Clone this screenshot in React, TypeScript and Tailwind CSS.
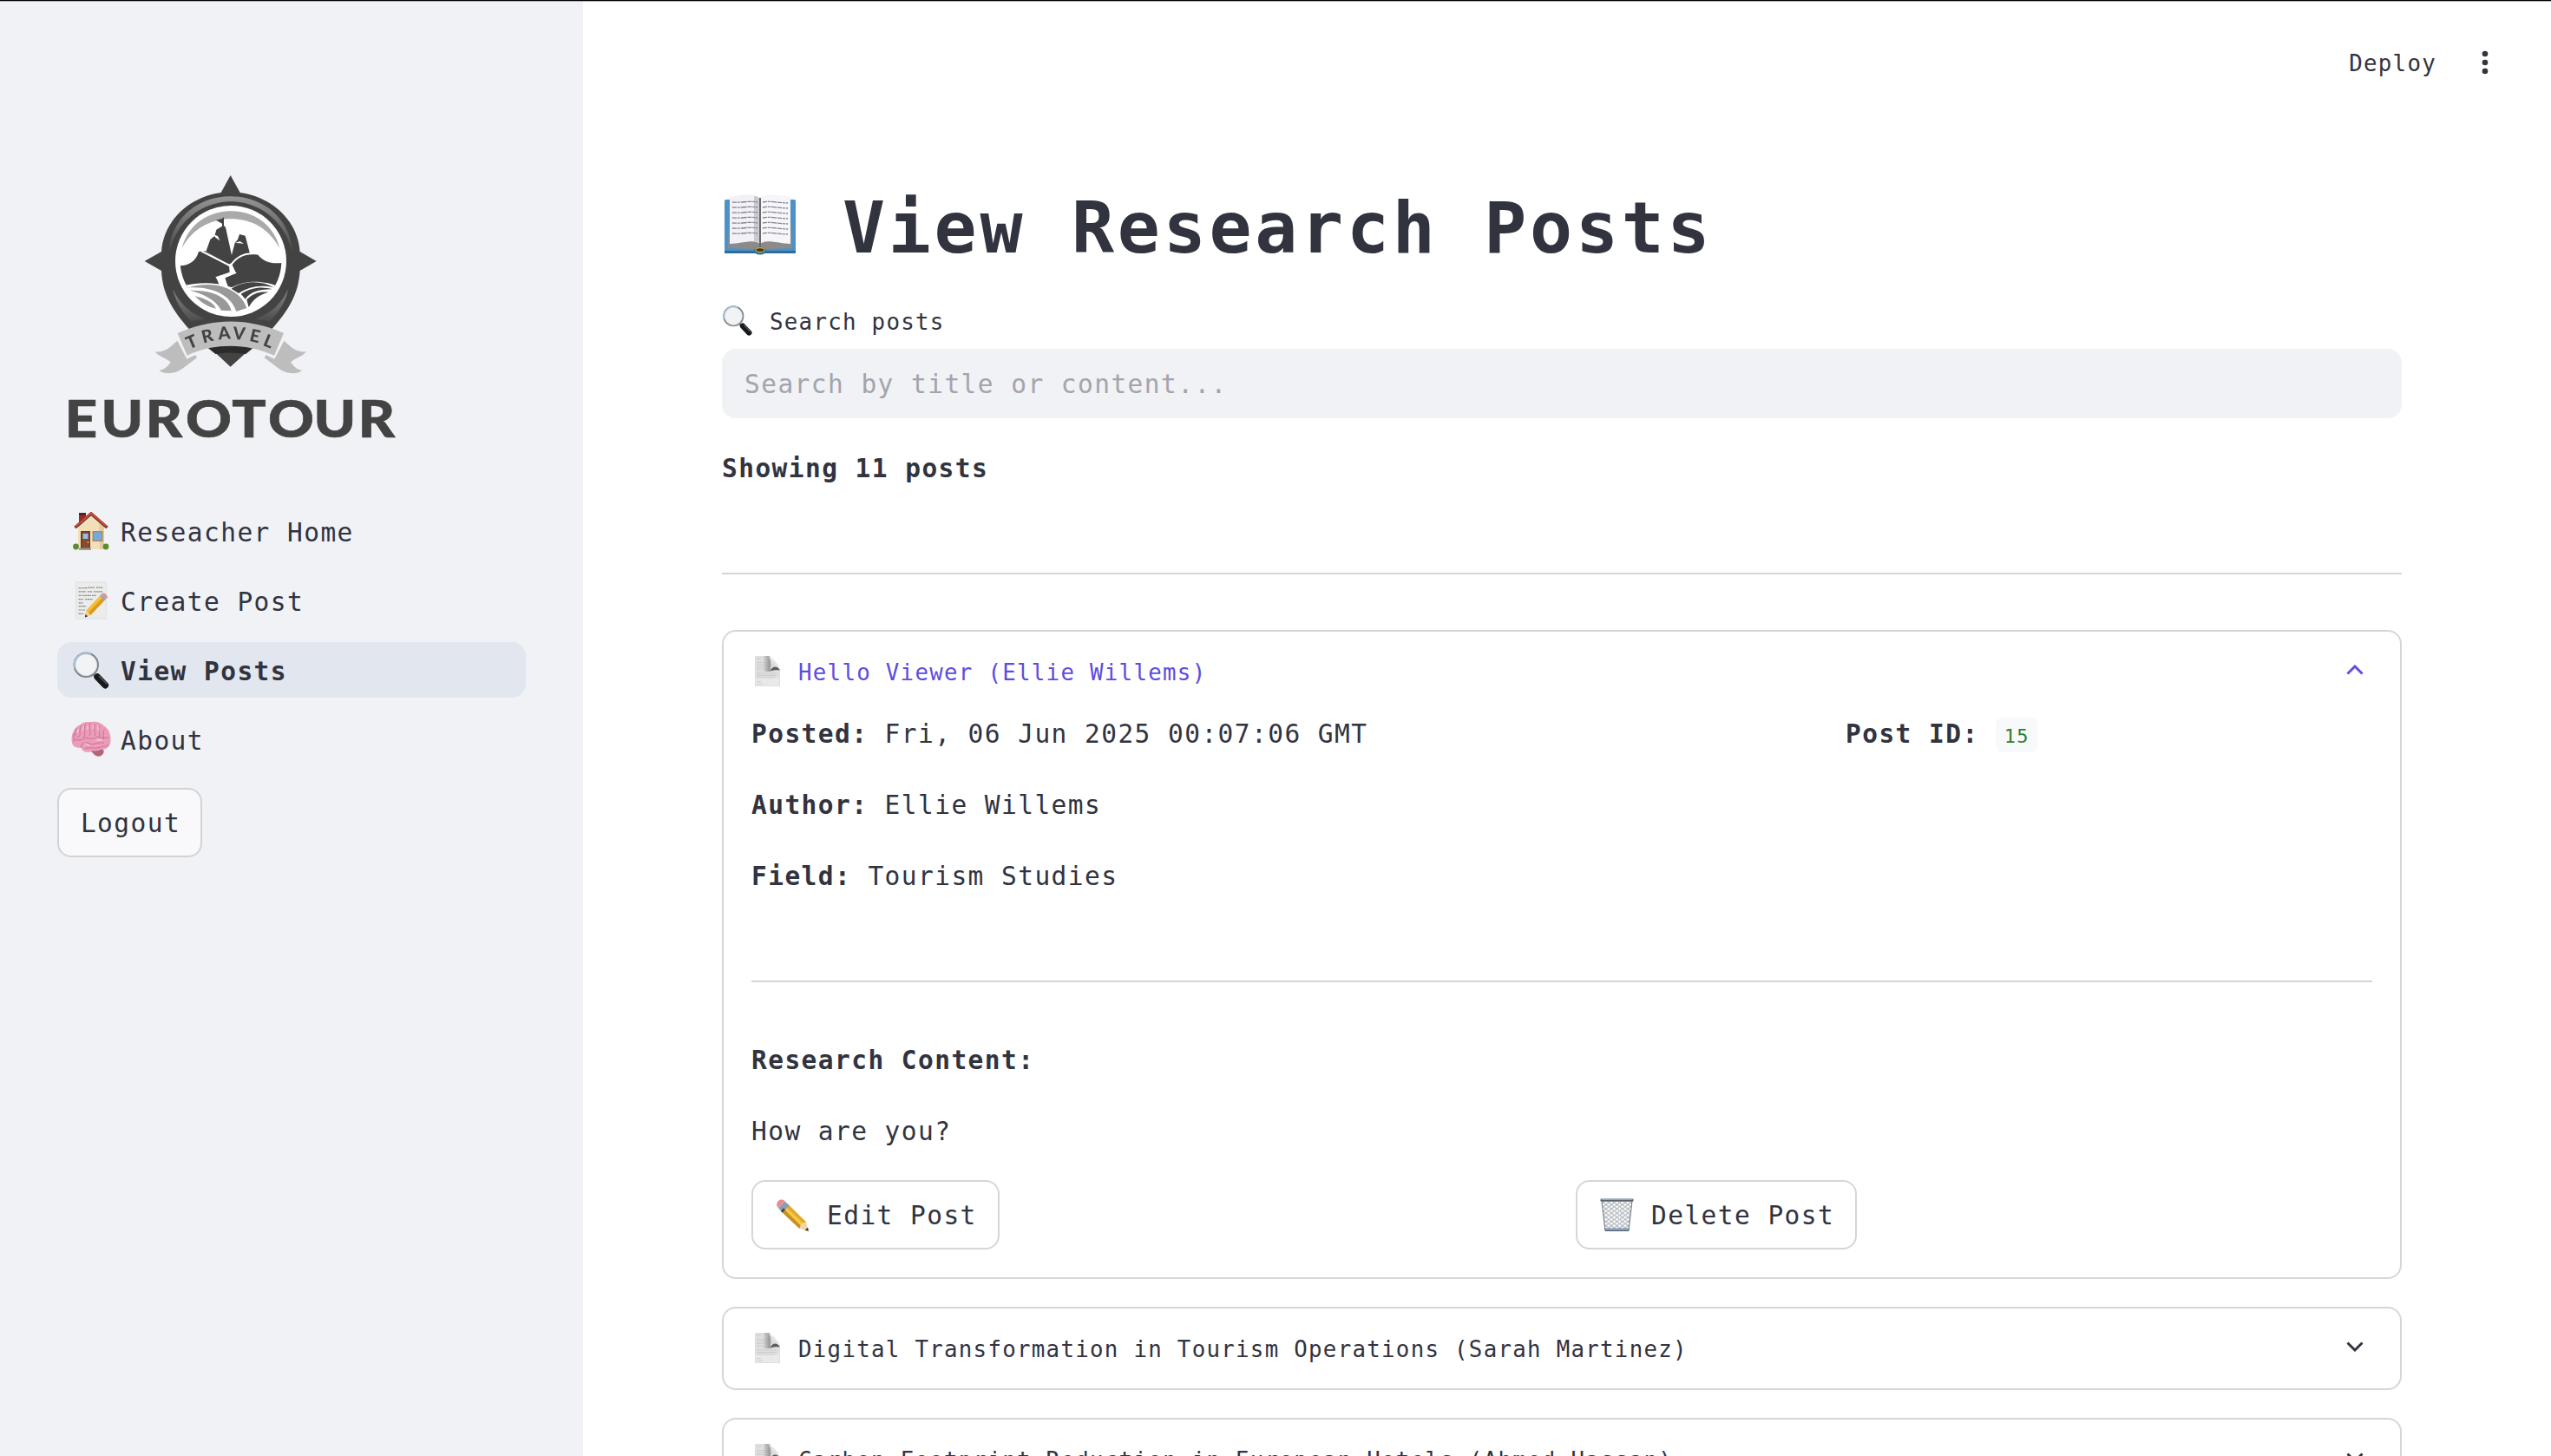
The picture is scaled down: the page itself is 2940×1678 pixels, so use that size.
import type { ReactNode } from "react";

const MONO = "font-['DejaVu_Sans_Mono','Liberation_Mono',monospace]";
const BODY = "text-[29.5px] tracking-[1.44px] whitespace-pre";
const SMALL = "text-[25.8px] tracking-[1.27px] whitespace-pre";

function Logo() {
  return (
    <svg viewBox="0 0 1260 990" className="-ml-1.5 block h-[330px] w-[420px] blur-[0.7px]" role="img" aria-label="Eurotour Travel">
      <defs>
        <linearGradient id="rim" x1="0" y1="0" x2="0" y2="1">
          <stop offset="0" stopColor="#949494" />
          <stop offset="1" stopColor="#444" />
        </linearGradient>
        <linearGradient id="low" x1="0" y1="0" x2="0" y2="1">
          <stop offset="0" stopColor="#858585" />
          <stop offset="1" stopColor="#4c4c4c" />
        </linearGradient>
        <clipPath id="disc">
          <circle cx="618" cy="333" r="175" />
        </clipPath>
      </defs>
      <path
        fill="#434343"
        d="M617 36 L650 96 C765 112 850 196 857 300 L914 333 L857 366 C852 450 815 505 760 568 L617 698 L474 568 C419 505 382 450 378 366 L320 333 L378 300 C385 196 470 112 584 96 Z"
      />
      <path fill="url(#rim)" d="M403 312 C405 190 500 109 617 109 C734 109 829 190 832 312 C812 200 720 127 617 127 C514 127 424 200 403 312 Z" />
      <path fill="url(#low)" d="M418 430 C440 480 480 515 530 533 L480 541 C450 510 425 470 418 430 Z M816 430 C794 480 754 515 704 533 L752 541 C785 510 810 470 816 430 Z" />
      <circle cx="618" cy="333" r="192" fill="#fff" />
      <path fill="#aaa" d="M449 288 C470 207 537 160 618 160 C700 160 766 207 787 288 C750 222 692 187 618 187 C545 187 485 222 449 288 Z" />
      <g clipPath="url(#disc)">
        <path
          fill="#434343"
          d="M532 300 L547 258 L562 246 L568 224 L588 212 L588 203 L567 191 L586 187 L594 181 L594 210 L600 216 L621 312 L632 270 L642 258 L648 240 L668 245 L684 307 L610 345 Z"
        />
        <path fill="#434343" d="M430 348 C470 352 497 335 507 300 L528 298 L614 352 L617 372 L567 388 L578 415 L600 425 L430 426 Z" />
        <path fill="#434343" d="M621 342 C650 310 680 303 712 311 C732 335 758 344 800 338 L800 425 L610 423 L594 392 L636 374 Z" />
        <path fill="none" stroke="#fff" strokeWidth="6" d="M516 298 L612 347 L626 363 M618 347 C640 314 670 304 704 307" />
        <path fill="#fff" d="M612 342 L638 374 L598 390 L608 422 L588 420 L565 388 L614 371 Z" />
        <path fill="#fff" d="M557 241 L573 246 L580 262 L566 252 Z M633 270 L650 264 L663 273 L648 271 Z" />
        <path fill="#fff" d="M430 425 C510 400 580 408 620 424 C670 398 730 395 810 430 L780 560 L450 560 Z" />
        <path fill="#999" d="M472 424 C560 398 650 425 673 495 L637 507 C617 445 545 420 472 424 Z" />
        <path fill="#999" d="M476 434 C560 432 610 460 620 505 L585 503 C565 465 520 445 476 434 Z" />
        <path fill="#999" d="M494 454 C535 463 558 478 567 497 C540 492 513 475 494 454 Z" />
        <path fill="#434343" d="M620 428 C665 399 725 400 767 424 C716 414 684 421 645 444 Z" />
        <path fill="#434343" d="M653 446 C690 422 730 420 761 430 C712 430 686 440 668 464 Z" />
        <path fill="#434343" d="M673 466 C695 443 720 437 748 440 C715 450 695 465 680 492 Z" />
      </g>
      <path fill="#2b2b2b" d="M539 633 C592 623 642 623 695 633 L670 654 C635 648 600 648 565 654 Z" />
      <path fill="#bdbdbd" d="M433 608 L466 671 L496 657 L501 667 L450 705 C425 723 392 726 370 711 C388 709 400 697 410 682 C393 668 373 665 356 646 C392 648 405 633 433 608 Z" />
      <path fill="#bdbdbd" d="M802 608 L769 671 L739 657 L734 667 L785 705 C810 723 843 726 865 711 C847 709 835 697 825 682 C842 668 862 665 879 646 C843 648 830 633 802 608 Z" />
      <path fill="#bdbdbd" d="M434 582 C555 528 680 528 801 582 L768 659 C670 615 565 615 467 659 Z" />
      <g fill="#434343" fontFamily="Lato" fontWeight="900" fontSize="60" textAnchor="middle">
        <text transform="translate(491 631) rotate(-23)">T</text>
        <text transform="translate(542 612) rotate(-14)">R</text>
        <text transform="translate(597 603) rotate(-5)">A</text>
        <text transform="translate(645 604) rotate(5)">V</text>
        <text transform="translate(697 612) rotate(13)">E</text>
        <text transform="translate(741 629) rotate(22)">L</text>
      </g>
      <text
        transform="scale(1.1 1)"
        x="40 154 294 420 565 679 822 962"
        y="941"
        fill="#434343"
        stroke="#434343"
        strokeWidth="2"
        fontFamily="Lato"
        fontWeight="900"
        fontSize="178"
      >
        EUROTOUR
      </text>
    </svg>
  );
}

function House({ className }: { className: string }) {
  return (
    <svg viewBox="0 0 42 44" className={className}>
      <rect x="7" y="2" width="8" height="14" fill="#8f2f28" />
      <rect x="7" y="1" width="8" height="3" fill="#5d1f1c" />
      <path d="M6 17 L21 3 L36 17 V43 H6 Z" fill="#f0dfb8" />
      <path d="M30 12 L36 17 V43 H31 Z" fill="#e2cb9c" />
      <path d="M2.5 18 L21 2 L39.5 18" fill="none" stroke="#5f2a24" strokeWidth="3.6" />
      <path d="M3 17 L21 1.5 L39 17" fill="none" stroke="#d2493a" strokeWidth="2.2" />
      <rect x="9" y="22" width="11" height="20" fill="#6d3a22" />
      <rect x="10.5" y="23" width="8" height="18" fill="#8a4b2c" />
      <rect x="11.5" y="25" width="6" height="6" fill="#8fc0ee" />
      <circle cx="17.5" cy="35" r="1" fill="#e8b645" />
      <rect x="22.5" y="22" width="12" height="12" fill="#a98a63" />
      <rect x="24" y="23.5" width="9" height="9" fill="#73a9df" />
      <rect x="7" y="41.5" width="14" height="2.5" fill="#999" />
      <circle cx="3.5" cy="40" r="3.4" fill="#5b8c33" />
      <circle cx="38" cy="40" r="3.4" fill="#5b8c33" />
    </svg>
  );
}

function Memo({ className }: { className: string }) {
  return (
    <svg viewBox="0 0 42 46" className={className}>
      <rect x="3" y="1" width="36" height="44" fill="#ececeb" stroke="#dadada" strokeWidth="0.8" />
      <path
        d="M6 8 h4 m1 0 h5 m1 -.5 h8 m2 0 h8 M6 12.5 h9 m2 0 h5 m2 0 h11 M6 17 h4 m1 0 h10 m1 0 h5 M6 21.5 h6 m2 0 h9 M6 26 h5 M6 30 h9 M6 34.5 h8 M6 39 h6"
        stroke="#85858a"
        strokeWidth="1.3"
        strokeDasharray="2.2 0.6"
      />
      <path d="M13.5 43.5 L15 35 L33 16 L38.5 21.5 L20.5 40.5 Z" fill="#f3bf35" />
      <path d="M17.5 38 L35.5 19 L38.5 21.5 L20.5 40.5 Z" fill="#d99a22" />
      <path d="M13.5 43.5 L15 35 L20.5 40.5 Z" fill="#efd2a0" />
      <path d="M13.5 43.5 L14.2 39.8 L17 42.2 Z" fill="#333" />
      <path d="M31.5 17.5 L34 15 L39.5 20.5 L37 23 Z" fill="#9ba9bd" />
      <path d="M34 15 C36 12 43 18 40 21 Z" fill="#e98a8b" />
    </svg>
  );
}

function Magnifier({ className }: { className: string }) {
  return (
    <svg viewBox="0 0 44 46" className={className}>
      <path d="M25 28 L30 33" stroke="#8f9499" strokeWidth="3.5" />
      <path d="M29.5 31.5 L39 41.5" stroke="#17191b" strokeWidth="8" strokeLinecap="round" />
      <path d="M31.5 30.5 L40.5 39.5" stroke="#555b60" strokeWidth="1.5" strokeLinecap="round" />
      <circle cx="16" cy="17" r="14.3" fill="#f2f3f5" stroke="#7f868c" strokeWidth="2.2" />
      <path d="M2.2 21 A14.6 14.6 0 0 1 22 4" fill="none" stroke="#a8c5e4" strokeWidth="1.5" />
      <circle cx="16" cy="17" r="12.8" fill="none" stroke="#d8dadd" strokeWidth="0.8" />
    </svg>
  );
}

function Brain({ className }: { className: string }) {
  return (
    <svg viewBox="0 0 44 40" className={className}>
      <path d="M22 30 C26 28 37 29 36 34 C35 38 31 39.500 28 38.500 C24 37 24 33 19 33 Z" fill="#b56478" />
      <path
        d="M1 24 C-1 15 4 6 10 4 C14 0 20 1 22 1 C28 0 33 2 36 5 C42 9 44 15 43.500 22 C43 29 38 32 33 31 C29 34 23 32 20 34 C15 35 12 32 11 29 C6 30 2 28 1 24 Z"
        fill="#eb9cb8"
      />
      <g fill="none" stroke="#c56f90" strokeWidth="0.9" strokeLinecap="round">
        <path d="M6 8 C3 13 5 17 8 18 M11 5 C8 9 11 13 9 17 M16 3 C13 8 17 12 14 18 M21 2 C18 7 23 11 20 16 M27 3 C23 8 28 11 26 16 M32 5 C28 9 33 13 31 17 M37 9 C33 12 38 16 35 20" />
        <path d="M3 22 C6 18 9 23 13 20 C18 16 22 22 27 18 C31 16 35 20 41 18 M11 29 C10 24 17 22 21 25 C25 27 30 22 36 24 M15 30 C20 28 25 31 32 29 C36 27 38 29 41 26 M3 14 C2 18 3 20 4 22" />
      </g>
      <g fill="none" stroke="#fbc3d6" strokeWidth="1.3" strokeLinecap="round">
        <path d="M8 9 L7 13 M13.500 6 L13 10 M18.500 5 L18 9 M24 5 L24 8 M29.500 6 L30 10 M15 25 L20 27 M28 21 L34 21" />
      </g>
    </svg>
  );
}

function Book({ className }: { className: string }) {
  const rows = [9, 15, 21, 27, 33, 39, 45];
  return (
    <svg viewBox="0 0 82 70" className={className}>
      <rect x="0" y="6" width="82" height="62" rx="1.500" fill="#4c92c6" />
      <path d="M0 65 H82 V68 H0 Z" fill="#2f6c9b" />
      <path d="M4 62 L7 4 H75 L78 62 L47 63 L41 66 L35 63 Z" fill="#8d8b8a" />
      <path d="M6 3 C18 1 35 -3 41 5 V57 C33 51 20 57 6 57 Z" fill="#f1f1f7" />
      <path d="M76 3 C64 1 47 -3 41 5 V57 C49 51 62 57 76 57 Z" fill="#f5f5fa" />
      <path d="M34 2 C38 2 41 4 41 6 V57 C39 54 36 54 34 54 Z" fill="#c9c9d2" />
      <path d="M41 4 V62" stroke="#6d6a6c" strokeWidth="2" />
      {rows.map((y) => (
        <g key={y} stroke="#85858d" strokeWidth="1.3" strokeDasharray="5 .8 3 .8 7 .8" fill="none">
          <path d={`M9 ${y} C20 ${y + 1} 29 ${y - 2} 38 ${y}`} />
          <path d={`M44 ${y} C53 ${y - 2} 62 ${y + 1} 73 ${y + 1}`} />
        </g>
      ))}
      <ellipse cx="41" cy="65" rx="7" ry="4.500" fill="#2d6d9c" />
      <ellipse cx="41" cy="64" rx="5" ry="2.500" fill="#3d3421" stroke="#c2a53a" strokeWidth="1.300" />
    </svg>
  );
}

function Sheet({ className }: { className: string }) {
  return (
    <svg viewBox="0 0 30 35" className={className}>
      <defs>
        <linearGradient id="fold" x1="0" y1="0" x2="1" y2="0">
          <stop offset="0" stopColor="#cfcfcf" />
          <stop offset="1" stopColor="#6f6f6f" />
        </linearGradient>
        <linearGradient id="curl" x1="1" y1="0" x2="0" y2="1">
          <stop offset="0" stopColor="#fafafa" />
          <stop offset="0.6" stopColor="#dedede" />
          <stop offset="1" stopColor="#a5a5a5" />
        </linearGradient>
      </defs>
      <path d="M0 0 H17 L29 16 V35 H0 Z" fill="#dfdfdf" />
      <path d="M1 25 H28 V34 H1 Z" fill="#e9e9e9" />
      <path d="M2 3 h5 M2 7.500 h14 M2 10 h14 M2 12.500 h14 M2 15 h15 M2 20 h23 M2 22.500 h23 M2 25 h21 M2 29.500 h5 M2 32 h7" stroke="#cbcbcb" strokeWidth="0.9" />
      <path d="M10 0 H17 C18.500 5 18.500 11 17.500 18 L10 18 Z" fill="url(#fold)" opacity="0.7" />
      <path d="M17.500 17.500 C20 11 26 11 29 16.500 C26 16 21 16.500 17.500 17.500 Z" fill="#5c5c5c" />
      <path d="M15 0 C21 3 27 9 29 15 C26 11.500 21 10.500 18 12.500 C19 8 18 3 15 0 Z" fill="url(#curl)" />
    </svg>
  );
}

function Pencil({ className }: { className: string }) {
  return (
    <svg viewBox="0 0 40 40" className={className}>
      <path d="M6 15 L14 6.500 L34 28 L38.500 38.500 L28 35 Z" fill="#f6c843" />
      <path d="M6 15 L9 12 L31 33.500 L28 36 Z" fill="#c98f23" />
      <path d="M11.500 9.500 L14 6.500 L36 28 L34 31 Z" fill="#e3a92c" />
      <path d="M28 36 L30 30 L36 28 L38.500 38.500 Z" fill="#f0d6a4" />
      <path d="M34.500 37.600 L38 34.500 L38.800 38.800 Z" fill="#2c2c2c" />
      <path d="M3 11.500 L11 3.500 L16 8.500 L8 16.800 Z" fill="#8d9cb3" />
      <path d="M6 14.800 L9.500 11.500 L11 13.500 L8 16.800 Z" fill="#38404c" />
      <path d="M3 11.500 C-2 6 5 -2 11 3.500 Z" fill="#e88c8f" />
    </svg>
  );
}

function Bin({ className }: { className: string }) {
  return (
    <svg viewBox="0 0 39 40" className={className}>
      <defs>
        <pattern id="mesh" width="6.500" height="5" patternUnits="userSpaceOnUse">
          <path d="M0 2.500 L3.250 0 L6.500 2.500 L3.250 5 Z" fill="none" stroke="#6e7680" strokeWidth="0.7" />
        </pattern>
      </defs>
      <path d="M1.500 3 H37.500 L33.500 37 H5.500 Z" fill="#fbfbfc" />
      <path d="M1.500 3 H37.500 L33.500 37 H5.500 Z" fill="url(#mesh)" stroke="#6a717a" strokeWidth="1" />
      <rect x="0" y="0.500" width="39" height="3.200" rx="1.200" fill="#5a626c" />
      <rect x="1" y="0.500" width="37" height="1.200" rx="0.600" fill="#a9c0dc" />
      <rect x="5" y="35.500" width="29" height="3.500" rx="1.200" fill="#5a6a7e" />
      <rect x="6" y="36" width="27" height="1.200" fill="#a9c0dc" />
    </svg>
  );
}

function Chevron({ up }: { up?: boolean }) {
  return (
    <svg viewBox="0 0 20 12" className="mt-[15px] h-3 w-5 shrink-0">
      <path d={up ? "M1.500 10.500 L10 2 L18.500 10.500" : "M1.500 1.500 L10 10 L18.500 1.500"} fill="none" stroke="currentColor" strokeWidth="2.900" />
    </svg>
  );
}

const NAV = [
  { label: "Reseacher Home", Icon: House, active: false },
  { label: "Create Post", Icon: Memo, active: false },
  { label: "View Posts", Icon: Magnifier, active: true },
  { label: "About", Icon: Brain, active: false },
];

function Sidebar() {
  return (
    <aside className="flex w-[672px] shrink-0 flex-col items-start bg-[#f0f2f6] pt-[190px] pl-[66px]">
      <Logo />
      <nav className="mt-[60px] flex w-[540px] flex-col gap-4">
        {NAV.map(({ label, Icon, active }) => (
          <a key={label} className={`flex h-16 items-center rounded-2xl pl-4 ${active ? "bg-[#e2e7ef]" : ""}`}>
            <Icon className="h-11 w-[46px]" />
            <span className={`${BODY} ml-[11px] pt-[3px] leading-[48px] ${active ? "font-bold" : ""}`}>{label}</span>
          </a>
        ))}
      </nav>
      <button className={`${BODY} mt-6 h-20 w-[167px] rounded-2xl border-2 border-[#d2d3d7] bg-[#f9f9fb] pt-0.5 pl-0.5`}>Logout</button>
    </aside>
  );
}

function Summary({ title, open }: { title: string; open?: boolean }) {
  return (
    <div className={`flex h-12 items-start pr-2.5 pl-0.5 ${open ? "text-[#5d4ce0]" : ""}`}>
      <Sheet className="mt-[5px] ml-0.5 h-[35px] w-[30px]" />
      <span className={`${SMALL} ml-5 flex-1 leading-[48px]`}>{title}</span>
      <Chevron up={open} />
    </div>
  );
}

function Card({ children, className }: { children: ReactNode; className: string }) {
  return <section className={`rounded-2xl border-2 border-[#d5d6d8] px-8 pt-[23px] ${className}`}>{children}</section>;
}

function Field({ label, value }: { label: string; value: string }) {
  return (
    <p className={`${BODY} leading-[48px]`}>
      <strong>{label}</strong> {value}
    </p>
  );
}

function ActionButton({ children, className }: { children: ReactNode; className: string }) {
  return <button className={`${BODY} flex h-20 items-center rounded-2xl border-2 border-[#d5d6d8] pl-[26px] ${className}`}>{children}</button>;
}

export default function App() {
  return (
    <div className={`${MONO} relative flex h-[1678px] w-[2940px] overflow-hidden bg-white text-[#31333f]`}>
      <div className="absolute inset-x-0 top-0 h-0.5 border-t border-black bg-[#b0b0b2]" />
      <Sidebar />
      <main className="flex flex-1 flex-col">
        <header className="flex h-[215px] shrink-0 items-start justify-end pt-[53px] pr-[72px]">
          <span className={`${SMALL} leading-[40px]`}>Deploy</span>
          <svg viewBox="0 0 8 28" className="mt-[5px] ml-[52px] h-7 w-2" fill="currentColor">
            <circle cx="4" cy="4" r="3.300" />
            <circle cx="4" cy="14" r="3.300" />
            <circle cx="4" cy="24" r="3.300" />
          </svg>
        </header>
        <div className="mr-[172px] ml-[160px] flex flex-col">
          <h1 className="flex h-24 items-start text-[81.500px] leading-[96px] font-bold tracking-[3.740px] whitespace-pre">
            <Book className="mt-[9px] ml-[3px] h-[70px] w-[82px]" />
            <span className="ml-[54px]">View Research Posts</span>
          </h1>
          <label className="mt-10 flex h-10 items-start">
            <Magnifier className="h-9 w-9" />
            <span className={`${SMALL} ml-[19px] leading-[40px]`}>Search posts</span>
          </label>
          <div className={`${BODY} mt-[11px] h-20 rounded-2xl bg-[#f0f2f6] pt-px pl-[26px] leading-[80px] text-[#a3a4ab]`}>Search by title or content...</div>
          <p className={`${BODY} mt-[34px] leading-[48px] font-bold`}>Showing 11 posts</p>
          <hr className="mt-24 border-t-2 border-[#d5d6d8]" />

          <Card className="mt-16 pb-8">
            <Summary title="Hello Viewer (Ellie Willems)" open />
            <div className="mt-[23px] grid grid-cols-[1229px_1fr] gap-8">
              <div className="flex flex-col gap-[34px]">
                <Field label="Posted:" value="Fri, 06 Jun 2025 00:07:06 GMT" />
                <Field label="Author:" value="Ellie Willems" />
                <Field label="Field:" value="Tourism Studies" />
              </div>
              <div className={`${BODY} flex h-12 items-start leading-[48px]`}>
                <strong>Post ID: </strong>
                <code className={`${MONO} mt-[5px] h-10 w-12 rounded-lg bg-[#f8f9fb] pl-2.5 text-[22px] leading-[43px] tracking-[1.150px] text-[#2f8132]`}>15</code>
              </div>
            </div>
            <hr className="mt-24 border-t-2 border-[#d5d6d8]" />
            <p className={`${BODY} mt-[66px] leading-[48px] font-bold`}>Research Content:</p>
            <p className={`${BODY} mt-[34px] leading-[48px]`}>How are you?</p>
            <div className="mt-8 grid grid-cols-2 gap-8">
              <ActionButton className="w-[286px]">
                <Pencil className="h-[39px] w-[39px]" />
                <span className="ml-5 pt-0.5">Edit Post</span>
              </ActionButton>
              <ActionButton className="w-[324px]">
                <Bin className="h-[39px] w-[39px]" />
                <span className="ml-5 pt-0.5">Delete Post</span>
              </ActionButton>
            </div>
          </Card>
          <Card className="mt-8 h-24">
            <Summary title="Digital Transformation in Tourism Operations (Sarah Martinez)" />
          </Card>
          <Card className="mt-8 h-24">
            <Summary title="Carbon Footprint Reduction in European Hotels (Ahmed Hassan)" />
          </Card>
        </div>
      </main>
    </div>
  );
}
